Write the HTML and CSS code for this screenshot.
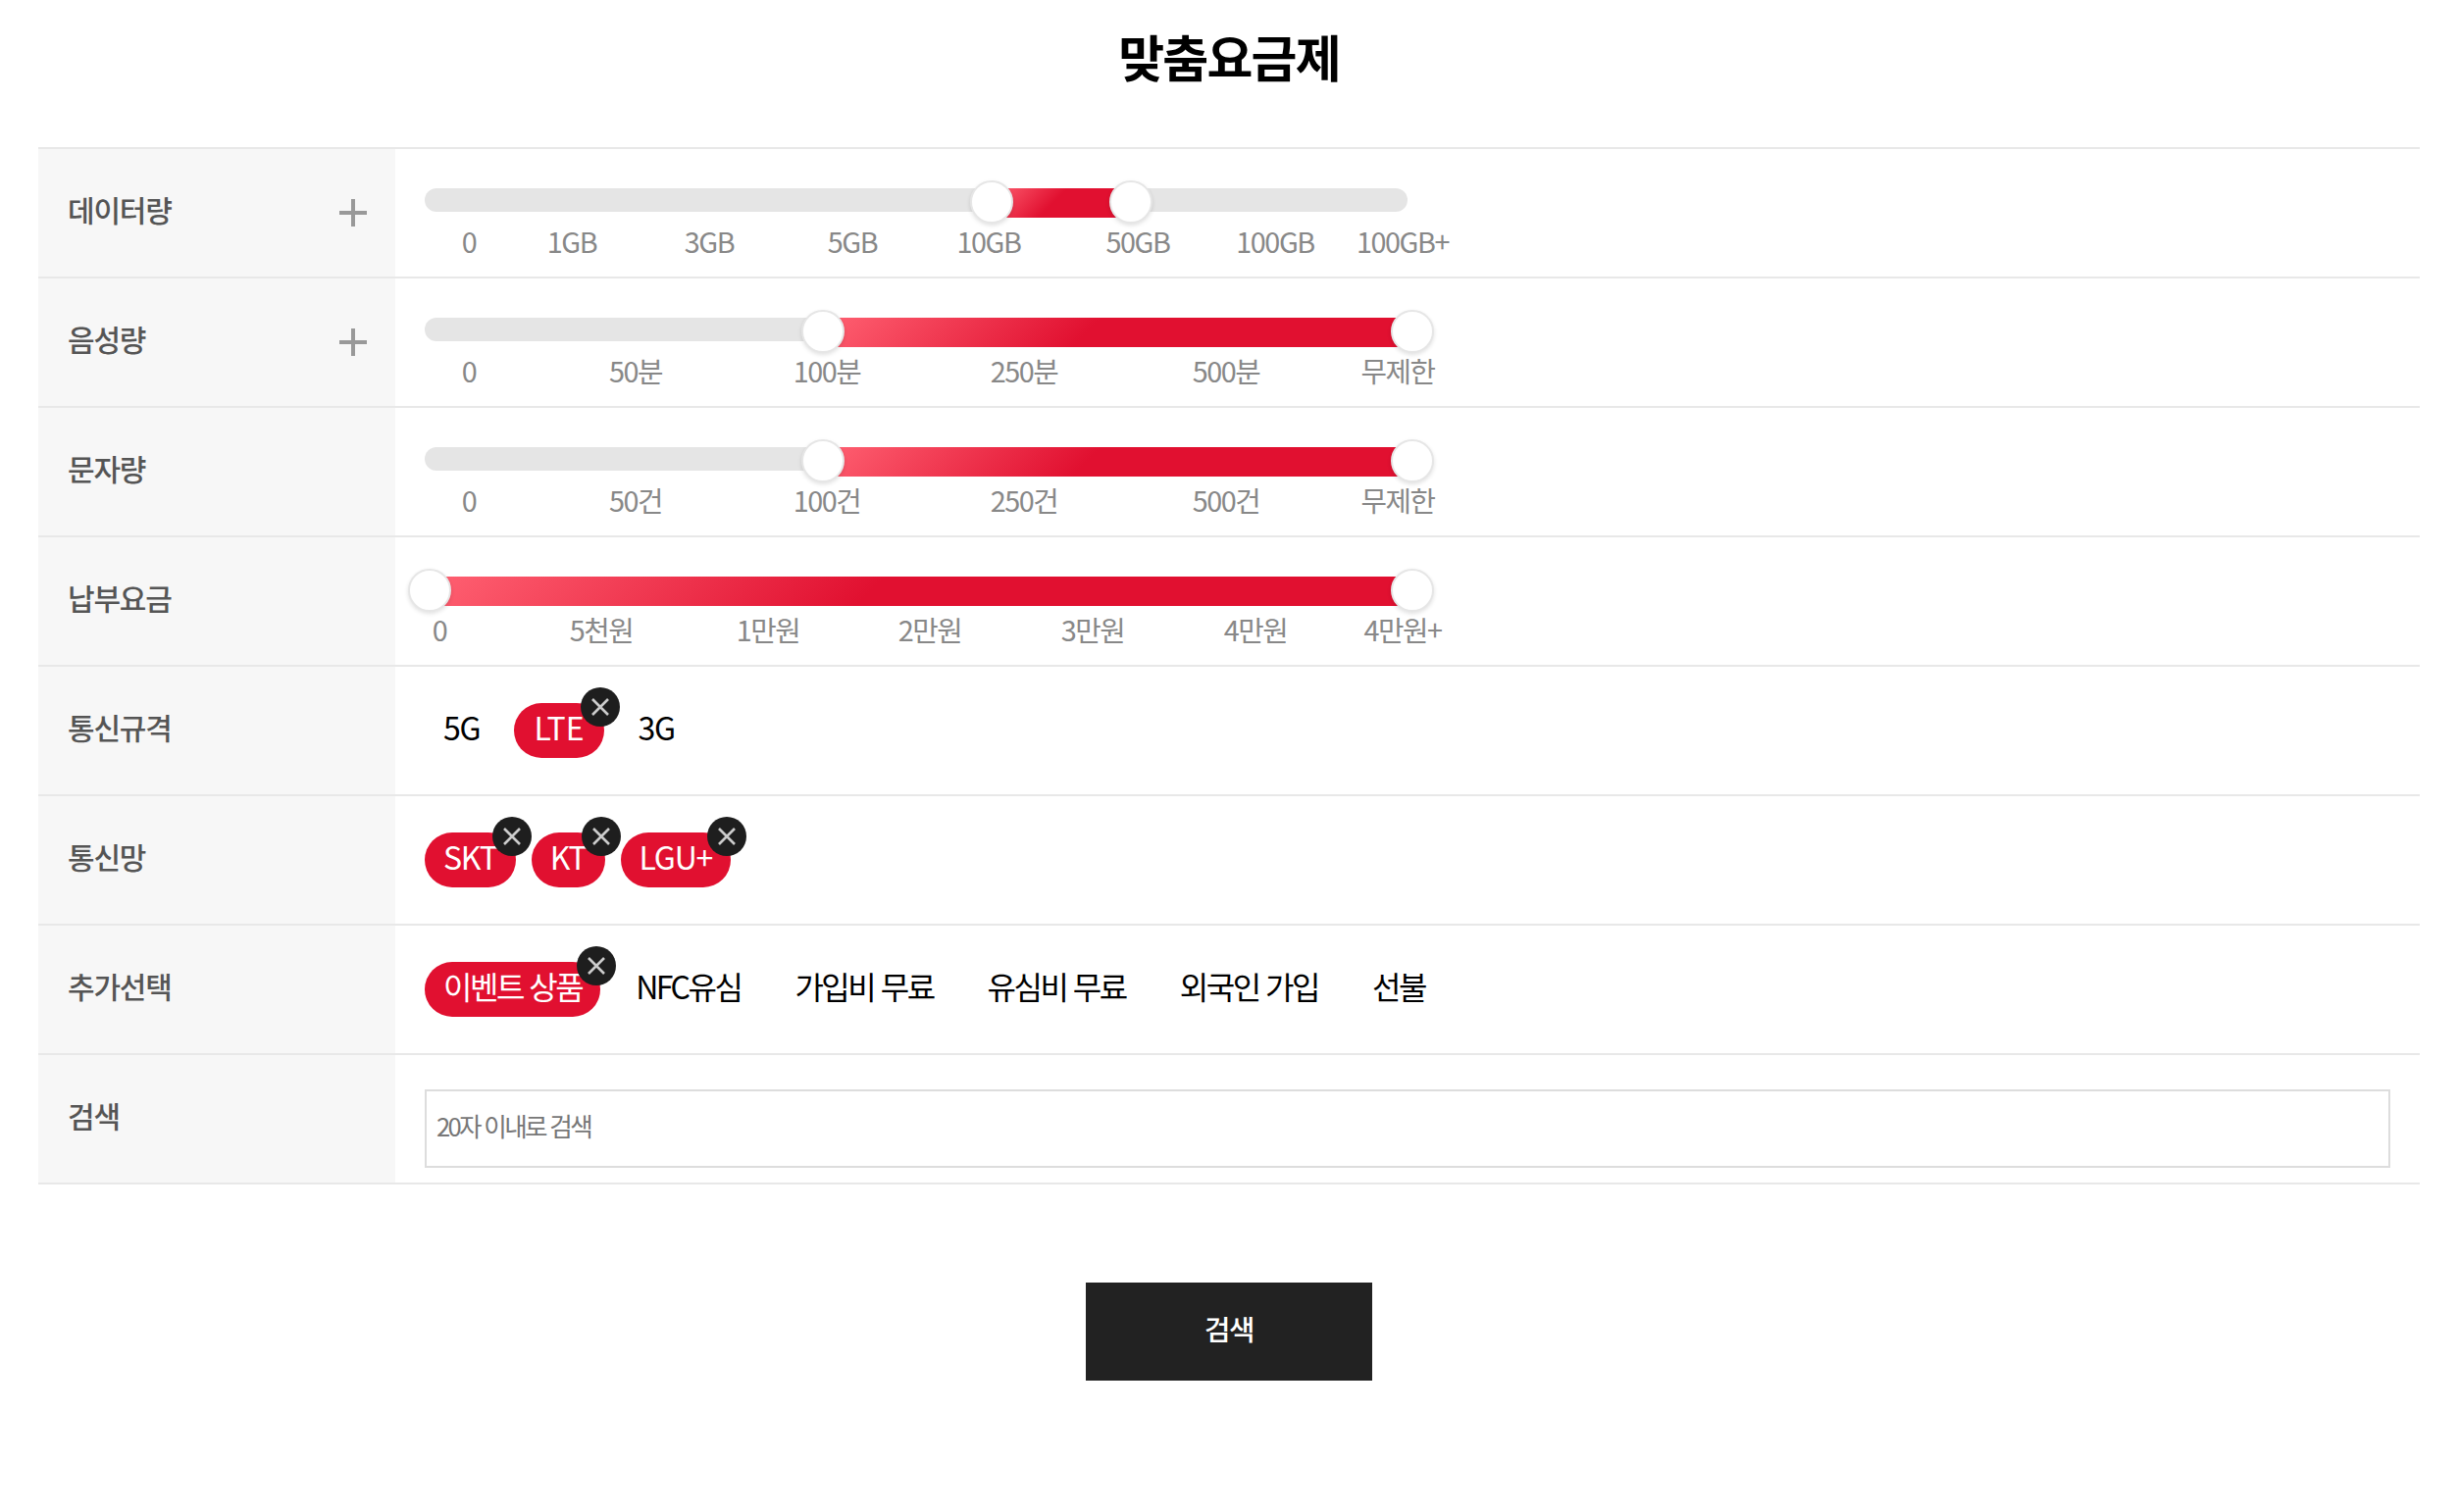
FILE: index.html
```html
<!DOCTYPE html>
<html lang="ko">

<head>
    <meta charset="UTF-8">
    <meta name="viewport" content="width=device-width, initial-scale=1.0">
    <title>맞춤요금제</title>
    <link rel="stylesheet" href="styles.css">
</head>

<body>
    <h1 class="page-title">맞춤요금제</h1>

    <div class="filter-table">
        <div class="filter-row">
            <div class="filter-label">데이터량
                <svg class="plus-icon" viewBox="0 0 30 30"><path d="M15 1v28M1 15h28" /></svg>
            </div>
            <div class="filter-cell slider-cell">
                <div class="slider">
                    <div class="track"></div>
                    <div class="range" style="left: 578px; width: 142px"></div>
                    <div class="handle" style="left: 556px"></div>
                    <div class="handle" style="left: 698px"></div>
                </div>
                <div class="ticks">
                    <span class="tick" style="margin-left: 45px">0</span>
                    <span class="tick" style="margin-left: 105px">1GB</span>
                    <span class="tick" style="margin-left: 140px">3GB</span>
                    <span class="tick" style="margin-left: 146px">5GB</span>
                    <span class="tick" style="margin-left: 139px">10GB</span>
                    <span class="tick" style="margin-left: 152px">50GB</span>
                    <span class="tick" style="margin-left: 140px">100GB</span>
                    <span class="tick" style="margin-left: 130px">100GB+</span>
                </div>
            </div>
        </div>

        <div class="filter-row">
            <div class="filter-label">음성량
                <svg class="plus-icon" viewBox="0 0 30 30"><path d="M15 1v28M1 15h28" /></svg>
            </div>
            <div class="filter-cell slider-cell">
                <div class="slider">
                    <div class="track"></div>
                    <div class="range" style="left: 406px; width: 600px"></div>
                    <div class="handle" style="left: 384px"></div>
                    <div class="handle" style="left: 985px"></div>
                </div>
                <div class="ticks">
                    <span class="tick" style="margin-left: 45px">0</span>
                    <span class="tick" style="margin-left: 170px">50분</span>
                    <span class="tick" style="margin-left: 195px">100분</span>
                    <span class="tick" style="margin-left: 201px">250분</span>
                    <span class="tick" style="margin-left: 206px">500분</span>
                    <span class="tick" style="margin-left: 175px">무제한</span>
                </div>
            </div>
        </div>

        <div class="filter-row">
            <div class="filter-label">문자량</div>
            <div class="filter-cell slider-cell">
                <div class="slider">
                    <div class="track"></div>
                    <div class="range" style="left: 406px; width: 600px"></div>
                    <div class="handle" style="left: 384px"></div>
                    <div class="handle" style="left: 985px"></div>
                </div>
                <div class="ticks">
                    <span class="tick" style="margin-left: 45px">0</span>
                    <span class="tick" style="margin-left: 170px">50건</span>
                    <span class="tick" style="margin-left: 195px">100건</span>
                    <span class="tick" style="margin-left: 201px">250건</span>
                    <span class="tick" style="margin-left: 206px">500건</span>
                    <span class="tick" style="margin-left: 175px">무제한</span>
                </div>
            </div>
        </div>

        <div class="filter-row">
            <div class="filter-label">납부요금</div>
            <div class="filter-cell slider-cell">
                <div class="slider">
                    <div class="track"></div>
                    <div class="range" style="left: 5px; width: 1002px"></div>
                    <div class="handle" style="left: -17px"></div>
                    <div class="handle" style="left: 985px"></div>
                </div>
                <div class="ticks">
                    <span class="tick" style="margin-left: 15px">0</span>
                    <span class="tick" style="margin-left: 165px">5천원</span>
                    <span class="tick" style="margin-left: 170px">1만원</span>
                    <span class="tick" style="margin-left: 165px">2만원</span>
                    <span class="tick" style="margin-left: 166px">3만원</span>
                    <span class="tick" style="margin-left: 166px">4만원</span>
                    <span class="tick" style="margin-left: 150px">4만원+</span>
                </div>
            </div>
        </div>

        <div class="filter-row">
            <div class="filter-label">통신규격</div>
            <div class="filter-cell chip-cell">
                <span class="chip">5G</span>
                <span class="chip selected chip-wide">LTE
                    <span class="chip-close"><svg viewBox="0 0 20 20"><path d="M2 2l16 16M18 2L2 18" /></svg></span>
                </span>
                <span class="chip">3G</span>
            </div>
        </div>

        <div class="filter-row">
            <div class="filter-label">통신망</div>
            <div class="filter-cell chip-cell">
                <span class="chip selected">SKT
                    <span class="chip-close"><svg viewBox="0 0 20 20"><path d="M2 2l16 16M18 2L2 18" /></svg></span>
                </span>
                <span class="chip selected">KT
                    <span class="chip-close"><svg viewBox="0 0 20 20"><path d="M2 2l16 16M18 2L2 18" /></svg></span>
                </span>
                <span class="chip selected">LGU+
                    <span class="chip-close"><svg viewBox="0 0 20 20"><path d="M2 2l16 16M18 2L2 18" /></svg></span>
                </span>
            </div>
        </div>

        <div class="filter-row">
            <div class="filter-label">추가선택</div>
            <div class="filter-cell chip-cell chip-cell-wide">
                <span class="chip chip-ko selected">이벤트 상품
                    <span class="chip-close"><svg viewBox="0 0 20 20"><path d="M2 2l16 16M18 2L2 18" /></svg></span>
                </span>
                <span class="chip chip-ko">NFC유심</span>
                <span class="chip chip-ko">가입비 무료</span>
                <span class="chip chip-ko">유심비 무료</span>
                <span class="chip chip-ko">외국인 가입</span>
                <span class="chip chip-ko">선불</span>
            </div>
        </div>

        <div class="filter-row">
            <div class="filter-label">검색</div>
            <div class="filter-cell search-cell">
                <input class="search-input" type="text" placeholder="20자 이내로 검색">
            </div>
        </div>
    </div>

    <button class="search-button">검색</button>
</body>

</html>
```

FILE: styles.css
```css
body {
    font-family: 'Noto Sans CJK KR', 'Noto Sans', sans-serif;
    margin: 0;
    background-color: #fff;
    color: #000;
}

.page-title {
    margin: 0;
    height: 150px;
    padding-top: 18px;
    box-sizing: border-box;
    font-size: 51px;
    font-weight: 700;
    line-height: 78px;
    letter-spacing: -1.8px;
    text-align: center;
    color: #000;
}

.filter-table {
    width: 2428px;
    margin-left: 39px;
    border-bottom: 2px solid #e8e8e8;
}

.filter-row {
    display: grid;
    grid-template-columns: 364px 1fr;
    height: 132px;
    box-sizing: border-box;
    border-top: 2px solid #e8e8e8;
}

.filter-label {
    display: flex;
    align-items: center;
    justify-content: space-between;
    padding: 0 28px 8px 30px;
    background-color: #f7f7f7;
    font-size: 30px;
    font-weight: 500;
    letter-spacing: -1.2px;
    color: #555;
}

.plus-icon {
    width: 30px;
    height: 30px;
    margin-top: 7px;
    fill: none;
    stroke: #999;
    stroke-width: 4;
}

.filter-cell {
    padding: 0 30px;
}

.slider-cell {
    padding-top: 40px;
}

.slider {
    position: relative;
    width: 1002px;
    height: 24px;
}

.track {
    height: 24px;
    border-radius: 12px;
    background-color: #e5e5e5;
}

.range {
    position: absolute;
    top: 0;
    height: 30px;
    background: linear-gradient(135deg, #ff6172 0%, #e11030 45%);
}

.handle {
    position: absolute;
    top: -8px;
    width: 44px;
    height: 44px;
    box-sizing: border-box;
    border: 2px solid #e6e6e6;
    border-radius: 50%;
    background-color: #fff;
    box-shadow: 0 2px 4px rgba(0, 0, 0, 0.12);
}

.ticks {
    display: flex;
    margin-top: 10px;
    font-size: 28.8px;
    line-height: 40px;
    letter-spacing: -1.44px;
    color: #888;
}

.tick {
    display: flex;
    justify-content: center;
    width: 0;
    white-space: nowrap;
}

.chip-cell {
    display: flex;
    align-items: center;
    gap: 16px;
}

.chip-cell-wide {
    gap: 17px;
}

.chip {
    position: relative;
    height: 56px;
    padding: 0 19px;
    border-radius: 28px;
    font-size: 32px;
    line-height: 48px;
    letter-spacing: -1.2px;
    white-space: nowrap;
}

.chip-wide {
    padding: 0 20px;
    letter-spacing: 0;
}

.chip-ko {
    letter-spacing: -2.5px;
}

.chip.selected {
    background-color: #e11030;
    color: #fff;
}

.chip-close {
    position: absolute;
    top: -16px;
    right: -16px;
    display: flex;
    align-items: center;
    justify-content: center;
    width: 40px;
    height: 40px;
    border-radius: 50%;
    background-color: #1e1e1e;
}

.chip-close svg {
    width: 20px;
    height: 20px;
    fill: none;
    stroke: #ccc;
    stroke-width: 2.6;
}

.search-cell {
    padding-top: 35px;
}

.search-input {
    display: block;
    width: 2004px;
    height: 80px;
    box-sizing: border-box;
    padding: 0 10px 8px;
    border: 2px solid #ddd;
    outline: none;
    font-family: inherit;
    font-size: 25.6px;
    letter-spacing: -2.7px;
}

.search-input::placeholder {
    color: #777;
}

.search-button {
    display: block;
    width: 292px;
    height: 100px;
    margin: 100px auto 0;
    padding: 0 0 8px;
    border: none;
    background-color: #222;
    color: #fff;
    font-family: inherit;
    font-size: 28.8px;
    font-weight: 500;
    letter-spacing: -1.44px;
    cursor: pointer;
}
```
